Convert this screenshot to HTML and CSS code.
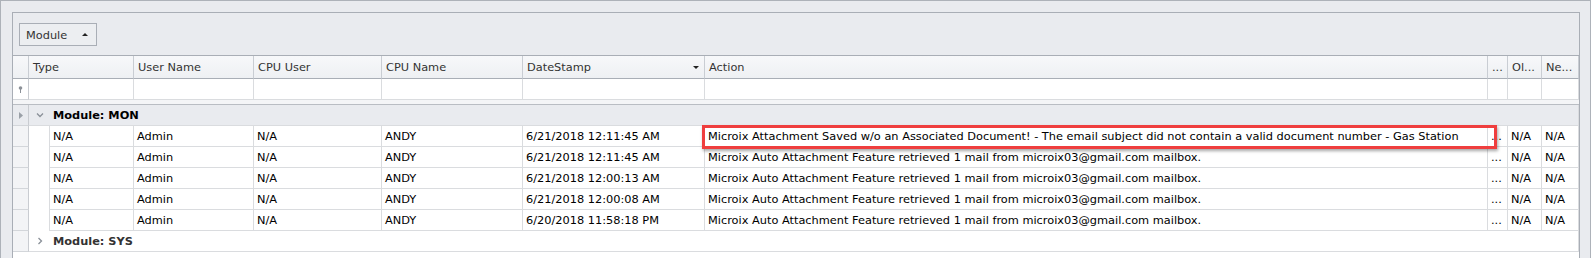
FILE: index.html
```html
<!DOCTYPE html>
<html lang="en">
<head>
    <meta charset="UTF-8">
    <title>Audit Log</title>
    <link rel="stylesheet" href="styles.css">
</head>
<body>
    <div class="frame">
        <div class="grid-panel">

            <!-- Group-by panel -->
            <div class="group-panel">
                <div class="group-chip">Module <span class="chip-arrow"></span></div>
            </div>

            <!-- Column headers -->
            <div class="row header">
                <div class="cell ind"></div>
                <div class="cell wide">Type</div>
                <div class="cell">User Name</div>
                <div class="cell">CPU User</div>
                <div class="cell">CPU Name</div>
                <div class="cell sorted">DateStamp <span class="sort-arrow"></span></div>
                <div class="cell">Action</div>
                <div class="cell">...</div>
                <div class="cell">Ol...</div>
                <div class="cell">Ne...</div>
            </div>

            <!-- Auto filter row -->
            <div class="row filter">
                <div class="cell ind">
                    <svg width="5" height="7" viewBox="0 0 5 7"><circle cx="2.5" cy="2" r="1.8" fill="#8c9198"/><rect x="2" y="3" width="1" height="4" fill="#8c9198"/></svg>
                </div>
                <div class="cell wide"></div>
                <div class="cell"></div>
                <div class="cell"></div>
                <div class="cell"></div>
                <div class="cell"></div>
                <div class="cell"></div>
                <div class="cell"></div>
                <div class="cell"></div>
                <div class="cell"></div>
            </div>
            <div class="separator"></div>

            <!-- Group: MON -->
            <div class="row group-row focused">
                <div class="cell ind">
                    <svg width="4" height="7" viewBox="0 0 4 7"><path d="M0 0 L4 3.5 L0 7 Z" fill="#9aa0a7"/></svg>
                </div>
                <div class="cell group-cell">
                    <svg class="chevron" width="8" height="8" viewBox="0 0 8 8"><polyline points="1,2.5 4,5.5 7,2.5" fill="none" stroke="#8a9098" stroke-width="1.3"/></svg>
                    <span>Module: MON</span>
                </div>
            </div>

            <div class="row data">
                <div class="cell ind"></div>
                <div class="cell indent"></div>
                <div class="cell">N/A</div>
                <div class="cell">Admin</div>
                <div class="cell">N/A</div>
                <div class="cell">ANDY</div>
                <div class="cell">6/21/2018 12:11:45 AM</div>
                <div class="cell action">Microix Attachment Saved w/o an Associated Document! - The email subject did not contain a valid document number - Gas Station
                    <span class="highlight"></span>
                </div>
                <div class="cell">...</div>
                <div class="cell">N/A</div>
                <div class="cell">N/A</div>
            </div>
            <div class="row data">
                <div class="cell ind"></div>
                <div class="cell indent"></div>
                <div class="cell">N/A</div>
                <div class="cell">Admin</div>
                <div class="cell">N/A</div>
                <div class="cell">ANDY</div>
                <div class="cell">6/21/2018 12:11:45 AM</div>
                <div class="cell action">Microix Auto Attachment Feature retrieved 1 mail from microix03@gmail.com mailbox.</div>
                <div class="cell">...</div>
                <div class="cell">N/A</div>
                <div class="cell">N/A</div>
            </div>
            <div class="row data">
                <div class="cell ind"></div>
                <div class="cell indent"></div>
                <div class="cell">N/A</div>
                <div class="cell">Admin</div>
                <div class="cell">N/A</div>
                <div class="cell">ANDY</div>
                <div class="cell">6/21/2018 12:00:13 AM</div>
                <div class="cell action">Microix Auto Attachment Feature retrieved 1 mail from microix03@gmail.com mailbox.</div>
                <div class="cell">...</div>
                <div class="cell">N/A</div>
                <div class="cell">N/A</div>
            </div>
            <div class="row data">
                <div class="cell ind"></div>
                <div class="cell indent"></div>
                <div class="cell">N/A</div>
                <div class="cell">Admin</div>
                <div class="cell">N/A</div>
                <div class="cell">ANDY</div>
                <div class="cell">6/21/2018 12:00:08 AM</div>
                <div class="cell action">Microix Auto Attachment Feature retrieved 1 mail from microix03@gmail.com mailbox.</div>
                <div class="cell">...</div>
                <div class="cell">N/A</div>
                <div class="cell">N/A</div>
            </div>
            <div class="row data">
                <div class="cell ind"></div>
                <div class="cell indent"></div>
                <div class="cell">N/A</div>
                <div class="cell">Admin</div>
                <div class="cell">N/A</div>
                <div class="cell">ANDY</div>
                <div class="cell">6/20/2018 11:58:18 PM</div>
                <div class="cell action">Microix Auto Attachment Feature retrieved 1 mail from microix03@gmail.com mailbox.</div>
                <div class="cell">...</div>
                <div class="cell">N/A</div>
                <div class="cell">N/A</div>
            </div>

            <!-- Group: SYS -->
            <div class="row group-row">
                <div class="cell ind"></div>
                <div class="cell group-cell">
                    <svg class="chevron" width="8" height="8" viewBox="0 0 8 8"><polyline points="2.5,1 5.5,4 2.5,7" fill="none" stroke="#8a9098" stroke-width="1.3"/></svg>
                    <span>Module: SYS</span>
                </div>
            </div>

        </div>
    </div>
</body>
</html>
```

FILE: styles.css
```css
/* --- General Setup --- */
:root {
    --panel-bg: #e9ebef;
    --frame-border: #adb2b9;
    --dark-line: #a9aeb6;
    --grid-line: #dadcdf;
    --header-line: #c9cdd3;
    --text-color: #000;
}

body {
    margin: 0;
    font-family: "DejaVu Sans", "Liberation Sans", sans-serif;
    font-size: 11.35px;
    color: var(--text-color);
    background: #fff;
}

/* --- Outer frame --- */
.frame {
    width: 1591px;
    height: 258px;
    box-sizing: border-box;
    border: 1px solid var(--frame-border);
    border-bottom: none;
    background: var(--panel-bg);
    padding: 11px 0 0 11px;
    overflow: hidden;
}

.grid-panel {
    width: 1568px;
    height: 246px;
    box-sizing: border-box;
    border: 1px solid var(--dark-line);
    border-bottom: none;
    background: #fff;
}

/* --- Group by panel --- */
.group-panel {
    height: 43px;
    box-sizing: border-box;
    background: var(--panel-bg);
    border-bottom: 1px solid var(--dark-line);
    padding: 10px 0 0 6px;
}

.group-chip {
    display: flex;
    align-items: center;
    width: 78px;
    height: 23px;
    box-sizing: border-box;
    border: 1px solid var(--dark-line);
    background: #eceef1;
    padding-left: 6px;
    color: #333;
}

.chip-arrow {
    margin-left: 15px;
    width: 0;
    height: 0;
    border-left: 3px solid transparent;
    border-right: 3px solid transparent;
    border-bottom: 3px solid #222;
}

/* --- Rows --- */
.row {
    display: grid;
    grid-template-columns: 16px 21px 84px 120px 128px 141px 182px 783px 20px 34px 37px;
}

.cell {
    box-sizing: border-box;
    height: 21px;
    line-height: 20px;
    padding: 0 3px;
    border-right: 1px solid var(--grid-line);
    border-bottom: 1px solid var(--grid-line);
    white-space: nowrap;
    overflow: hidden;
}

.cell.ind {
    display: flex;
    align-items: center;
    justify-content: center;
    padding: 0;
    background: #f3f4f6;
    border-right-color: #c9ccd1;
    border-bottom-color: #d3d6da;
}

.wide {
    grid-column: span 2;
}

/* Header */
.header .cell {
    height: 23px;
    line-height: 22px;
    padding: 0 4px;
    color: #333;
    background: linear-gradient(to bottom, #f7f8fa, #eef0f3);
    border-right-color: var(--header-line);
    border-bottom-color: var(--dark-line);
}

.header .cell.ind {
    background: linear-gradient(to bottom, #f7f8fa, #eef0f3);
}

.sorted {
    display: flex;
    align-items: center;
}

.sort-arrow {
    margin-left: auto;
    margin-right: 1px;
    width: 0;
    height: 0;
    border-left: 3px solid transparent;
    border-right: 3px solid transparent;
    border-top: 3px solid #222;
}

/* Filter row */
.filter .cell {
    background: #fff;
}

.filter .cell.ind {
    background: #fff;
}

.separator {
    height: 5px;
    box-sizing: border-box;
    background: #f4f5f7;
    border-bottom: 1px solid #b9bdc3;
}

/* Group rows */
.group-cell {
    grid-column: 2 / -1;
    display: flex;
    align-items: center;
    padding-left: 7px;
    font-weight: bold;
    color: #333;
}

.group-cell .chevron {
    margin-right: 9px;
}

.focused .cell {
    background: var(--panel-bg);
}

.focused .group-cell {
    color: #000;
}

.focused .cell.ind {
    background: var(--panel-bg);
}

/* Data rows */
.data .indent {
    border-bottom: none;
}

.action {
    position: relative;
    overflow: visible;
}

.highlight {
    position: absolute;
    left: -3px;
    top: -1px;
    width: 795px;
    height: 24px;
    box-sizing: border-box;
    border: 3px solid #ef3e3e;
    box-shadow: 1px 2px 3px rgba(0, 0, 0, 0.35);
    z-index: 2;
}
```
